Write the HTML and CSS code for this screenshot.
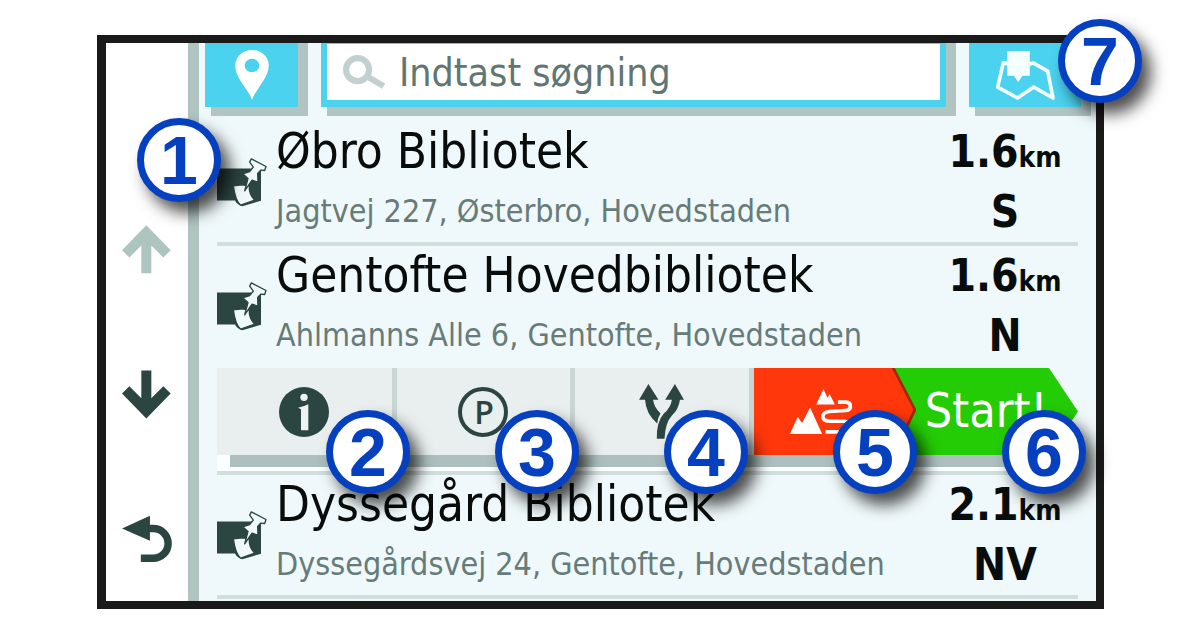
FILE: index.html
```html
<!DOCTYPE html>
<html lang="da">
<head>
    <meta charset="UTF-8">
    <meta name="viewport" content="width=device-width, initial-scale=1.0">
    <title>Indtast søgning</title>
    <link rel="stylesheet" href="styles.css">
</head>
<body>
<svg class="symbols" aria-hidden="true">
    <symbol id="pin-note" viewBox="0 0 150 146">
        <path d="M0 31H132V128L76 144Q60 140 54 127H0Z" fill="#2b4540"/>
        <path d="M49 83L76 80L97 84Q95 108 113 126L71 141Q55 128 49 83Z" fill="#f0f8fa" stroke="#2b4540" stroke-width="4" stroke-linejoin="round"/>
        <path d="M103 2L147 25L143 37L131 36L122 46L123 72L105 66L83 98L93 61L77 47L98 40L109 27L98 12Z" fill="#f0f8fa" stroke="#2b4540" stroke-width="4" stroke-linejoin="round"/>
    </symbol>
</svg>
<div class="device">
    <nav class="sidebar">
        <button class="nav-btn" aria-label="Op" disabled>
            <svg viewBox="0 0 150 146"><path d="M73 0L146 75L124 97L88 61V144H58V61L22 97L0 75Z" fill="#adc4bf"/></svg>
        </button>
        <button class="nav-btn" aria-label="Ned">
            <svg viewBox="0 0 150 146"><path d="M73 145L146 70L124 48L88 84V1H58V84L22 48L0 70Z" fill="#2b4540"/></svg>
        </button>
        <button class="nav-btn" aria-label="Tilbage">
            <svg viewBox="0 0 154 146"><path d="M0 39L86 0V77Z" fill="#2b4540"/><path d="M80 39H96A46 46 0 0 1 96 131H58" fill="none" stroke="#2b4540" stroke-width="23"/></svg>
        </button>
    </nav>
    <main class="content">
        <div class="topbar">
            <button class="top-btn near-btn" aria-label="Søg nær">
                <svg class="marker-icon" viewBox="0 0 100 149"><path fill-rule="evenodd" fill="#fff" d="M50 149C42 120 0 84 0 46A50 46 0 0 1 100 46C100 84 58 120 50 149ZM28 46A22 20 0 0 0 72 46A22 20 0 0 0 28 46Z"/></svg>
            </button>
            <label class="search">
                <svg class="search-icon" viewBox="0 0 124 100"><circle cx="43" cy="43" r="34" fill="none" stroke="#c3d0d1" stroke-width="18"/><path d="M70 62L120 92" stroke="#c3d0d1" stroke-width="18"/></svg>
                <input type="text" placeholder="Indtast søgning" aria-label="Indtast søgning">
            </label>
            <button class="top-btn map-btn" aria-label="Kort">
                <svg class="map-icon" viewBox="0 0 178 148"><path d="M36 39L22 35L5 109L65 142L114 109L172 142L156 61L112 36L100 40" fill="none" stroke="#f4ffff" stroke-width="11" stroke-linejoin="round"/><path d="M34 1H102V75H80L67 94L54 75H34Z" fill="#f4ffff"/></svg>
            </button>
            <span class="callout callout-map">7</span>
        </div>
        <div class="results">
            <article class="result">
                <svg class="place-icon"><use href="#pin-note"/></svg>
                <div class="place">
                    <h2>Øbro Bibliotek</h2>
                    <p>Jagtvej 227, Østerbro, Hovedstaden</p>
                </div>
                <div class="distance">
                    <div>1.6<small>km</small></div>
                    <div>S</div>
                </div>
                <span class="callout callout-result">1</span>
            </article>
            <article class="result selected">
                <svg class="place-icon"><use href="#pin-note"/></svg>
                <div class="place">
                    <h2>Gentofte Hovedbibliotek</h2>
                    <p>Ahlmanns Alle 6, Gentofte, Hovedstaden</p>
                </div>
                <div class="distance">
                    <div>1.6<small>km</small></div>
                    <div>N</div>
                </div>
            </article>
            <div class="actions">
                <div class="action-row">
                    <button class="action" aria-label="Info">
                        <svg viewBox="0 0 150 150"><circle cx="75" cy="75" r="75" fill="#2b4540"/><circle cx="75" cy="31" r="11" fill="#eef2f1"/><path d="M57 62Q72 60 88 52V130H66V67Z" fill="#eef2f1"/></svg>
                    </button>
                    <button class="action" aria-label="Parkering">
                        <svg class="parking-icon" viewBox="0 0 50 50"><circle cx="25" cy="25" r="23" fill="none" stroke="#2b4540" stroke-width="4"/><text x="26" y="37" text-anchor="middle">P</text></svg>
                    </button>
                    <button class="action" aria-label="Ruter">
                        <svg class="fork-icon" viewBox="0 0 134 164"><path d="M28 0L58 47H42Q44 68 64 88Q56 100 54 118Q20 88 18 47H0Z M107 0L134 47H122Q118 76 98 94Q78 116 76 163H53Q52 112 74 88Q94 72 98 47H78Z" fill="#2b4540"/></svg>
                    </button>
                    <button class="action scenic" aria-label="Naturskøn rute">
                        <svg class="scenic-icon" viewBox="0 0 185 134"><path d="M0 134L23 83L36 101L60 55L96 134Z M78 46L100 0L112 27L118 15L134 46Z" fill="#fff"/><path d="M143 39H168Q181 41 180 52Q179 63 166 64L118 67Q98 69 98 82Q98 95 118 96H162Q176 97 184 106M106 128H170" fill="none" stroke="#fff" stroke-width="11"/></svg>
                    </button>
                    <button class="action start">Start!</button>
                </div>
                <div class="callouts">
                    <span class="callout">2</span>
                    <span class="callout">3</span>
                    <span class="callout">4</span>
                    <span class="callout">5</span>
                    <span class="callout">6</span>
                </div>
            </div>
            <article class="result">
                <svg class="place-icon"><use href="#pin-note"/></svg>
                <div class="place">
                    <h2>Dyssegård Bibliotek</h2>
                    <p>Dyssegårdsvej 24, Gentofte, Hovedstaden</p>
                </div>
                <div class="distance">
                    <div>2.1<small>km</small></div>
                    <div>NV</div>
                </div>
            </article>
        </div>
    </main>
</div>
</body>
</html>
```

FILE: styles.css
```css
* {
    box-sizing: border-box;
}
body {
    margin: 0;
    padding: 35px 96px 0 97px;
    background: #fff;
    color: #080c0b;
    font-family: "DejaVu Sans Condensed", "DejaVu Sans", sans-serif;
}
button {
    display: flex;
    align-items: center;
    justify-content: center;
    padding: 0;
    border: none;
    background: none;
    font-family: inherit;
    cursor: pointer;
}
.symbols {
    display: none;
}
.device {
    display: flex;
    border: 8px solid #1a1a1a;
    border-left-width: 9px;
}
.sidebar {
    display: flex;
    flex-direction: column;
    align-items: center;
    gap: 96px;
    width: 93px;
    padding-top: 182px;
    border-right: 11px solid #b0c4c1;
}
.nav-btn svg {
    width: 50px;
    height: 49px;
}
.content {
    flex: 1;
    min-width: 0;
    background: #eff8fa;
}
.topbar {
    position: relative;
    display: flex;
    gap: 23px;
    height: 64px;
    padding: 0 15px 0 6px;
}
.top-btn,
.search {
    background: #4bd2ef;
    box-shadow: 10px 0 #b0c4c1, 6px 9px #b0c4c1, 10px 9px #b0c4c1;
}
.near-btn {
    width: 93px;
}
.map-btn {
    width: 112px;
}
.marker-icon {
    width: 34px;
    height: 50px;
}
.map-icon {
    width: 59px;
    height: 49px;
}
.search {
    display: flex;
    flex: 1;
    align-items: center;
    gap: 14px;
    min-width: 0;
    padding-left: 16px;
    border: solid #4bd2ef;
    border-width: 1px 6px 7px;
    background: #fff;
}
.search-icon {
    width: 42px;
    height: 34px;
}
.search input {
    flex: 1;
    min-width: 0;
    padding: 0;
    border: none;
    outline: none;
    background: none;
    font: inherit;
    font-size: 39px;
}
.search input::placeholder {
    color: #5f7673;
    opacity: 1;
}
.results {
    padding: 15px 18px 2px;
}
.result {
    position: relative;
    display: flex;
    gap: 9px;
    border-bottom: 4px solid #d0dedd;
}
.result.selected {
    border-bottom: none;
    padding-bottom: 2px;
}
.place-icon {
    width: 50px;
    height: 49px;
    margin-top: 36px;
}
.place {
    flex: 1;
    min-width: 0;
}
.place h2,
.place p {
    margin: 0;
    font-weight: normal;
    white-space: nowrap;
}
.place h2 {
    font-size: 49px;
    line-height: 60px;
}
.place p {
    color: #677b79;
    font-size: 32px;
    line-height: 58px;
}
.distance {
    width: 146px;
    font-size: 44px;
    font-weight: bold;
    line-height: 60px;
    text-align: center;
}
.distance small {
    font-size: 28px;
    line-height: 1;
}
.actions {
    position: relative;
    z-index: 1;
    border-bottom: 4px solid #d0dedd;
    padding-bottom: 4px;
    background: #fbffff;
}
/* drop shadow strip under the buttons */
.actions::after {
    content: "";
    display: block;
    height: 12px;
    margin: 0 14px 0 13px;
    background: #adc0bf;
}
.action-row {
    display: grid;
    grid-template-columns: 180fr 179fr 179fr 141fr 184fr;
    height: 87px;
    background: #eff8fa;
}
.action {
    border-right: 5px solid #c9d6d4;
    background: #e9eeee;
}
.action svg {
    width: 50px;
    height: 50px;
}
.parking-icon text {
    fill: #2b4540;
    font: 600 32px "Open Sans", sans-serif;
}
.action .fork-icon {
    width: 45px;
    height: 55px;
}
.action.scenic {
    position: relative;
    z-index: 1;
    justify-content: flex-start;
    margin-right: -22px;
    padding-left: 36px;
    border: none;
    background: #a5260c;
    clip-path: polygon(0 0, 141px 0, 100% 48%, 141px 100%, 0 100%);
}
.scenic::before {
    content: "";
    position: absolute;
    inset: 0 3px 0 0;
    background: #ff370a;
    clip-path: polygon(0 0, 138px 0, 100% 48%, 138px 100%, 0 100%);
}
.action .scenic-icon {
    position: relative;
    width: 62px;
    height: 45px;
}
.action.start {
    border: none;
    padding-bottom: 4px;
    background: #24cc05;
    clip-path: polygon(0 0, calc(100% - 29px) 0, 100% 50%, calc(100% - 29px) 100%, 0 100%);
    color: #fff;
    font-size: 48px;
}
.callout {
    display: flex;
    align-items: center;
    justify-content: center;
    width: 84px;
    height: 84px;
    border: 7px solid #0540c0;
    border-radius: 50%;
    background: #fff;
    box-shadow: 9px 11px 16px rgba(0, 0, 0, 0.7);
    color: #0540c0;
    font: bold 68px/70px "Liberation Sans", Arial, sans-serif;
}
.callouts {
    position: absolute;
    z-index: 2;
    top: 42px;
    right: -8px;
    left: 109px;
    display: flex;
    justify-content: space-between;
}
.callout-map {
    position: absolute;
    top: -24px;
    right: -46px;
}
.callout-result {
    position: absolute;
    top: -4px;
    left: -80px;
}
```
